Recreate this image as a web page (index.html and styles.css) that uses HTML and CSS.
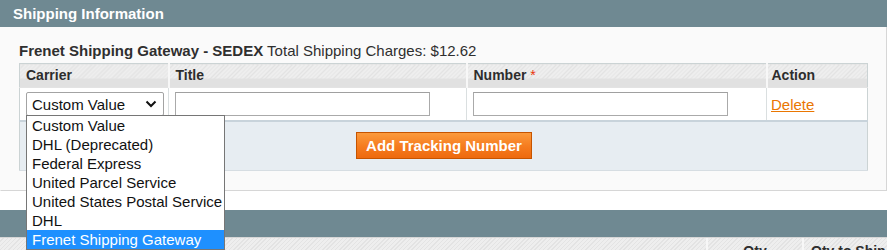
FILE: index.html
```html
<!DOCTYPE html>
<html>
<head>
<meta charset="utf-8">
<link rel="stylesheet" href="styles.css">
</head>
<body>
<div class="page">
  <div class="section-head">Shipping Information</div>
  <div class="fieldset">
    <div class="method"><strong>Frenet Shipping Gateway - SEDEX</strong> Total Shipping Charges: $12.62</div>
    <table class="grid">
      <colgroup>
        <col class="c1"><col class="c2"><col class="c3"><col class="c4">
      </colgroup>
      <thead>
        <tr class="headings">
          <th>Carrier</th>
          <th>Title</th>
          <th>Number <span class="req">*</span></th>
          <th class="last">Action</th>
        </tr>
      </thead>
      <tbody>
        <tr class="row">
          <td>
            <div class="select">
              <span>Custom Value</span>
              <svg class="chev" width="12" height="8" viewBox="0 0 12 8"><path d="M1.5 1.5 L6 6 L10.5 1.5" fill="none" stroke="#111" stroke-width="2"/></svg>
            </div>
          </td>
          <td><div class="input"></div></td>
          <td><div class="input"></div></td>
          <td class="last"><a class="link" href="#">Delete</a></td>
        </tr>
      </tbody>
      <tfoot>
        <tr>
          <td colspan="4" class="foot">
            <button class="btn">Add Tracking Number</button>
          </td>
        </tr>
      </tfoot>
    </table>
  </div>
  <div class="gap"></div>
  <div class="section-head"></div>
  <div class="grid-head">
    <div class="gh-main"></div>
    <div class="gh-qty">Qty</div>
    <div class="gh-ship">Qty to Ship</div>
  </div>

  <ul class="dropdown">
    <li>Custom Value</li>
    <li>DHL (Deprecated)</li>
    <li>Federal Express</li>
    <li>United Parcel Service</li>
    <li>United States Postal Service</li>
    <li>DHL</li>
    <li class="sel">Frenet Shipping Gateway</li>
  </ul>
</div>
</body>
</html>
```
FILE: styles.css
```css
html, body {
  margin: 0;
  padding: 0;
  background: #fff;
}
body {
  font-family: "Liberation Sans", Arial, sans-serif;
  color: #2f2f2f;
  font-size: 15px;
  overflow: hidden;
}
.page {
  position: relative;
  width: 887px;
  height: 250px;
  overflow: hidden;
}
.section-head {
  height: 27px;
  line-height: 27px;
  background: #6f8992;
  color: #fff;
  font-weight: bold;
  font-size: 15px;
  padding-left: 13px;
}
.fieldset {
  background: #fafafa;
  border: 1px solid #d6d6d6;
  border-top: 0;
  border-left-color: #fafafa;
  width: 848px;
  height: 148px;
  padding: 15px 19px 0 18px;
}
.method {
  font-size: 15px;
  line-height: 18px;
  color: #2f2f2f;
  margin-bottom: 3px;
}
.grid {
  border-collapse: collapse;
  width: 848px;
  table-layout: fixed;
  border: 1px solid #cbd3d4;
}
.c1 { width: 149px; }
.c2 { width: 298px; }
.c3 { width: 300px; }
.c4 { width: 101px; }
.headings th {
  height: 23px;
  line-height: 23px;
  padding: 0 6px;
  text-align: left;
  font-size: 14px;
  font-weight: bold;
  color: #2d2d2d;
  border-right: 2px solid #f7f7f7;
  border-bottom: 1px solid #e3e3e3;
  background:
    linear-gradient(to bottom, rgba(0,0,0,0) 62%, #e1e1e1 62%),
    repeating-linear-gradient(135deg, #eeeeee 0 2px, #e3e3e3 2px 3px);
}
.headings th.last { border-right: 0; padding-left: 4px; }
.req { color: #eb340a; font-weight: normal; }
.row td {
  height: 32px;
  background: #fff;
  padding: 0 6px;
  border-right: 1px solid #dadfe0;
  vertical-align: middle;
}
.row td.last { border-right: 0; padding-left: 4px; }
.select {
  width: 138px;
  height: 24px;
  box-sizing: border-box;
  border: 1px solid #a3a3a3;
  border-radius: 2px;
  background: #fff;
  display: flex;
  align-items: center;
  justify-content: space-between;
  padding: 0 4px 0 5px;
  font-size: 15px;
  color: #111;
}
.chev { margin-right: 2px; }
.input {
  width: 255px;
  height: 24px;
  box-sizing: border-box;
  border: 1px solid #aaaaaa;
  border-top-color: #a0a0a0;
  background: #fff;
}
.link {
  color: #ea7601;
  text-decoration: underline;
  font-size: 15px;
}
.foot {
  height: 46px;
  background: #e7edf2;
  border-top: 2px solid #c8d3db;
  border-bottom: 1px solid #d6dde2;
  text-align: center;
  padding: 0 0 2px;
  vertical-align: middle;
}
.btn {
  height: 27px;
  width: 176px;
  margin-left: 1px;
  border: 1px solid #c65400;
  background: linear-gradient(to bottom, #fc9a3c 0%, #f57b1e 55%, #ee6a0e 100%);
  color: #fff;
  font-family: "Liberation Sans", Arial, sans-serif;
  font-weight: bold;
  font-size: 15px;
  padding: 0;
  cursor: pointer;
}
.gap { height: 19px; }
.grid-head {
  display: flex;
  height: 20px;
  background: repeating-linear-gradient(135deg, #eeeeee 0 2px, #e3e3e3 2px 3px);
  border-top: 1px solid #d6d6d6;
  font-weight: bold;
  font-size: 14px;
  color: #2d2d2d;
}
.gh-main { width: 706px; border-right: 2px solid #f7f7f7; }
.gh-qty { width: 94px; border-right: 2px solid #f7f7f7; text-align: center; padding-top: 5px; }
.gh-ship { flex: 1; padding: 5px 0 0 7px; }
.dropdown {
  position: absolute;
  left: 26px;
  top: 115px;
  width: 197px;
  margin: 0;
  padding: 0;
  list-style: none;
  background: #fff;
  border: 1px solid #767676;
  font-size: 15px;
  color: #111;
}
.dropdown li {
  height: 19px;
  line-height: 19px;
  padding-left: 5px;
  white-space: nowrap;
}
.dropdown li.sel {
  background: #1e90ff;
  color: #fff;
}
```
